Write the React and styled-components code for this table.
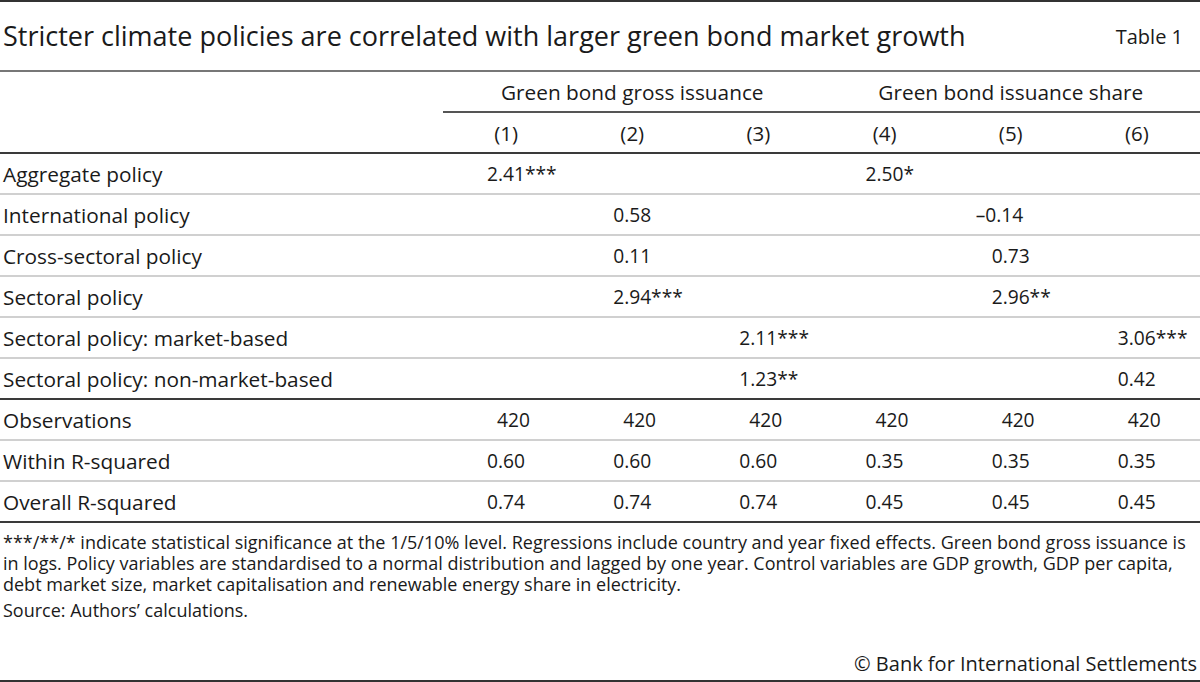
import React from 'react';
import styled, { createGlobalStyle } from 'styled-components';

const GlobalStyle = createGlobalStyle`
  html, body {
    margin: 0;
    padding: 0;
    background: #ffffff;
  }
  body {
    font-family: 'Open Sans', 'Noto Sans', sans-serif;
    color: #1a1a1a;
  }
`;

const Page = styled.div`
  width: 1200px;
  height: 682px;
  box-sizing: border-box;
  border-top: 2px solid #333;
  border-bottom: 2px solid #333;
  display: flex;
  flex-direction: column;
`;

const TitleBar = styled.div`
  height: 68px;
  display: flex;
  justify-content: space-between;
  align-items: center;
  padding: 0 17px 2px 3px;
  box-sizing: border-box;
`;

const Title = styled.h1`
  margin: 0;
  font-size: 27px;
  font-weight: 400;
`;

const TableTag = styled.span`
  font-size: 20px;
  padding-top: 3px;
`;

const Table = styled.div`
  border-top: 2px solid #777;
`;

const Row = styled.div`
  display: grid;
  grid-template-columns: 443px repeat(6, 1fr);
  height: 41px;
  box-sizing: border-box;
  align-items: center;
  font-size: 20.8px;
  border-bottom: ${(p) =>
    p.$rule === 'dark' ? '2px solid #3a3a3a' : p.$rule === 'none' ? '0' : '2px solid #d0d0d0'};
`;

const Label = styled.div`
  padding-left: 3px;
  white-space: nowrap;
`;

const GroupHead = styled.div`
  grid-column: span 3;
  text-align: center;
  align-self: stretch;
  display: flex;
  align-items: center;
  justify-content: center;
  border-bottom: 2px solid #555;
`;

const ColNum = styled.div`
  text-align: center;
  font-size: 20.5px;
`;

const Num = styled.div`
  padding-left: ${(p) => p.$indent}px;
  font-size: 19.2px;
  white-space: nowrap;
`;

const Notes = styled.div`
  flex: 1;
  display: flex;
  flex-direction: column;
  padding: 9px 12px 6px 3px;
  font-size: 18px;
  line-height: 21px;
`;

const Note = styled.p`
  margin: 0;
`;

const Source = styled.p`
  margin: 5px 0 0 0;
`;

const Copyright = styled.p`
  margin: auto -9px 0 0;
  text-align: right;
  font-size: 20px;
`;

const rows = [
  { label: 'Aggregate policy', values: ['2.41***', null, null, '2.50*', null, null] },
  { label: 'International policy', values: [null, '0.58', null, null, '–0.14', null] },
  { label: 'Cross-sectoral policy', values: [null, '0.11', null, null, '0.73', null] },
  { label: 'Sectoral policy', values: [null, '2.94***', null, null, '2.96**', null] },
  { label: 'Sectoral policy: market-based', values: [null, null, '2.11***', null, null, '3.06***'] },
  { label: 'Sectoral policy: non-market-based', values: [null, null, '1.23**', null, null, '0.42'], rule: 'dark' },
  { label: 'Observations', values: ['420', '420', '420', '420', '420', '420'] },
  { label: 'Within R-squared', values: ['0.60', '0.60', '0.60', '0.35', '0.35', '0.35'] },
  { label: 'Overall R-squared', values: ['0.74', '0.74', '0.74', '0.45', '0.45', '0.45'], rule: 'dark' },
];

// decimal-ish alignment: whole numbers sit further right, the minus hangs left
const indentFor = (v) => {
  if (v.startsWith('–')) return 28;
  if (!v.includes('.')) return 54;
  return 44;
};

export default function App() {
  return (
    <>
      <GlobalStyle />
      <Page>
        <TitleBar>
          <Title>Stricter climate policies are correlated with larger green bond market growth</Title>
          <TableTag>Table 1</TableTag>
        </TitleBar>

        <Table>
          <Row $rule="none">
            <div />
            <GroupHead>Green bond gross issuance</GroupHead>
            <GroupHead>Green bond issuance share</GroupHead>
          </Row>
          <Row $rule="dark">
            <div />
            {[1, 2, 3, 4, 5, 6].map((n) => (
              <ColNum key={n}>({n})</ColNum>
            ))}
          </Row>
          {rows.map((r) => (
            <Row key={r.label} $rule={r.rule}>
              <Label>{r.label}</Label>
              {r.values.map((v, i) =>
                v ? <Num key={i} $indent={indentFor(v)}>{v}</Num> : <div key={i} />
              )}
            </Row>
          ))}
        </Table>

        <Notes>
          <Note>
            ***/**/* indicate statistical significance at the 1/5/10% level. Regressions include country and year
            fixed effects. Green bond gross issuance is in logs. Policy variables are standardised to a normal
            distribution and lagged by one year. Control variables are GDP growth, GDP per capita, debt market size,
            market capitalisation and renewable energy share in electricity.
          </Note>
          <Source>Source: Authors’ calculations.</Source>
          <Copyright>© Bank for International Settlements</Copyright>
        </Notes>
      </Page>
    </>
  );
}
